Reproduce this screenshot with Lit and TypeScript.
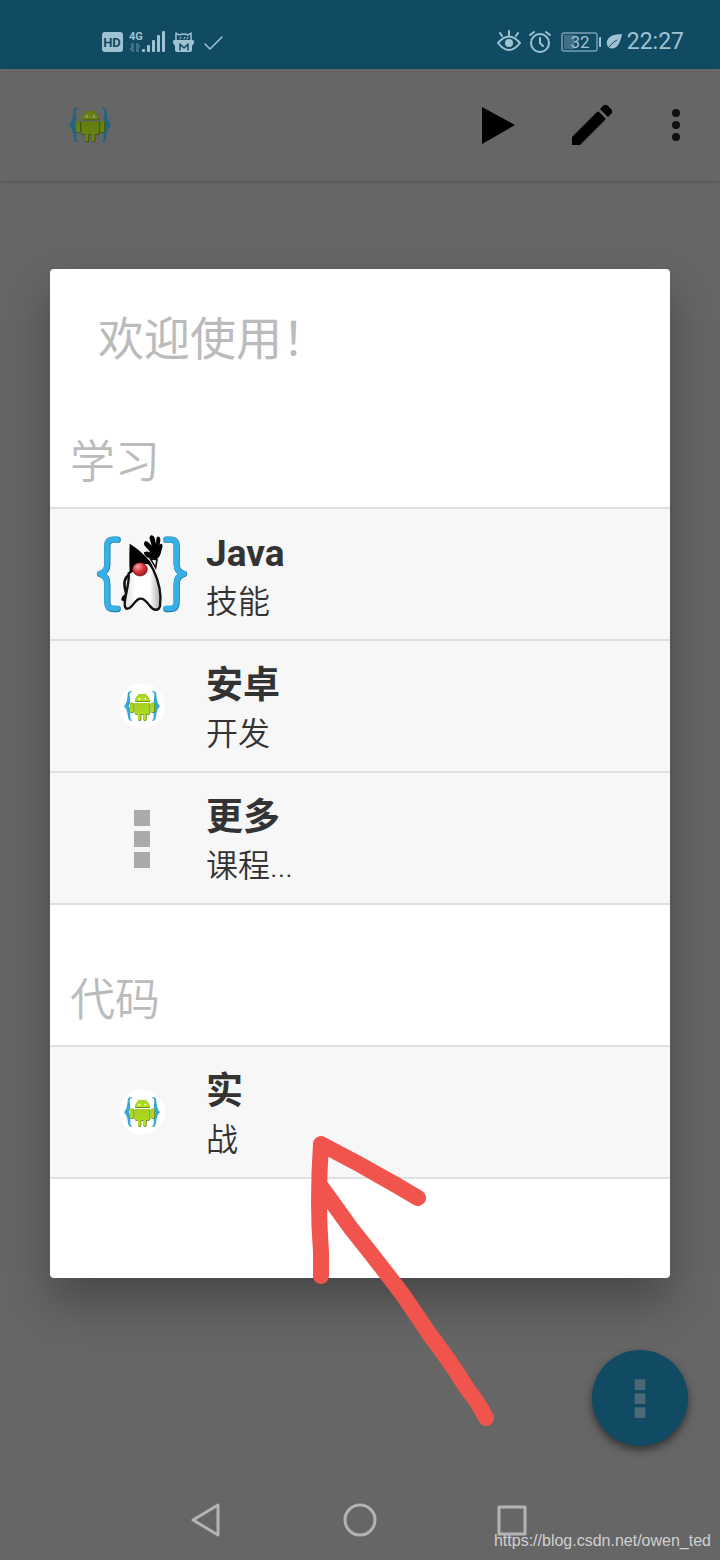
import { LitElement, html, css, svg, nothing } from 'lit';
import { customElement, property } from 'lit/decorators.js';

type IconName = 'java' | 'android' | 'more';

interface Entry {
    icon: IconName;
    title: string;
    subtitle: string;
}

interface Section {
    heading: string;
    entries: Entry[];
}

const SECTIONS: Section[] = [
    {
        heading: '学习',
        entries: [
            { icon: 'java', title: 'Java', subtitle: '技能' },
            { icon: 'android', title: '安卓', subtitle: '开发' },
            { icon: 'more', title: '更多', subtitle: '课程...' }
        ]
    },
    {
        heading: '代码',
        entries: [{ icon: 'android', title: '实', subtitle: '战' }]
    }
];

// Android robot between two braces, with an optional white disc behind it
const androidIcon = (disc: boolean) => html`
    <svg class="android" viewBox="0 0 144 144" aria-hidden="true">
        <defs>
            <linearGradient id="robot" x1="0" y1="0" x2="0" y2="1">
                <stop offset="0" stop-color="#a4d01c" />
                <stop offset="1" stop-color="#b4e01c" />
            </linearGradient>
        </defs>
        ${disc ? svg`<circle cx="72" cy="72" r="68" fill="#fff" />` : nothing}
        <g fill="#38a8da">
            <path d="M41 27 Q29 26 29 38 Q28 62 18 73 Q28 82 30 104 Q31 117 41 117 L41 114 Q36 112 37 100 Q39 82 33 73 Q39 62 35 40 Q34 31 41 30 Z" />
            <path d="M103 27 Q115 26 115 38 Q116 62 126 73 Q116 82 114 104 Q113 117 103 117 L103 114 Q108 112 107 100 Q105 82 111 73 Q105 62 109 40 Q110 31 103 30 Z" />
        </g>
        <g fill="#5c7a14">
            <path d="M51 60 Q52 43 63 40 L60 35 L66 38 Q73 35 80 38 L86 35 L83 40 Q94 43 96 60 Z" />
            <path d="M50 64 H97 V94 Q97 98 92 98 H86 V112 Q86 117 81 117 Q76 117 76 112 V98 H70 V112 Q70 117 65 117 Q60 117 60 112 V98 H55 Q50 98 50 94 Z" />
            <rect x="36" y="62" width="13" height="31" rx="6" />
            <rect x="98" y="62" width="13" height="31" rx="6" />
        </g>
        <g fill="url(#robot)">
            <path d="M51 58 Q52 42 63 39 L60 34 L66 37 Q73 34 80 37 L86 34 L83 39 Q93 42 94 58 Z" />
            <path d="M50 63 H95 V92 Q95 96 90 96 H84 V110 Q84 115 80 115 Q76 115 76 110 V96 H68 V110 Q68 115 64 115 Q60 115 60 110 V96 H55 Q50 96 50 92 Z" />
            <rect x="36" y="61" width="11" height="30" rx="5" />
            <rect x="98" y="61" width="11" height="30" rx="5" />
        </g>
        <circle cx="64" cy="50" r="3" fill="#fff" />
        <circle cx="82" cy="50" r="3" fill="#fff" />
    </svg>
`;

const javaIcon = html`
    <svg class="java" viewBox="0 0 276 240" aria-hidden="true">
        <defs>
            <radialGradient id="nose" cx="0.35" cy="0.3" r="0.8">
                <stop offset="0" stop-color="#f7a3a3" />
                <stop offset="0.5" stop-color="#d8343c" />
                <stop offset="1" stop-color="#9c1218" />
            </radialGradient>
            <linearGradient id="belly">
                <stop offset="0" stop-color="#ddd" />
                <stop offset="0.3" stop-color="#fff" />
                <stop offset="0.7" stop-color="#fff" />
                <stop offset="1" stop-color="#aaa" />
            </linearGradient>
        </defs>
        <g fill="none" stroke-linecap="round" stroke-linejoin="round">
            <g stroke="#1f7ca8" stroke-width="19">
                <path d="M65 17 H52 Q34 17 34 36 V90 Q34 114 12 120 Q34 126 34 150 V204 Q34 225 52 225 H65" />
                <path d="M211 17 H224 Q242 17 242 36 V90 Q242 114 264 120 Q242 126 242 150 V204 Q242 225 224 225 H211" />
            </g>
            <g stroke="#36b0e6" stroke-width="16">
                <path d="M64 16 H51 Q33 16 33 35 V89 Q33 113 11 119 Q33 125 33 149 V203 Q33 223 51 223 H64" />
                <path d="M210 16 H223 Q241 16 241 35 V89 Q241 113 263 119 Q241 125 241 149 V203 Q241 223 223 223 H210" />
            </g>
        </g>
        <path d="M98 122 Q82 137 86 158 L91 182" fill="none" stroke="#111" stroke-width="8" />
        <path d="M86 181 Q75 189 76 199 L86 203 L94 184 Z" fill="#000" />
        <path d="M163 74 L179 101 L183 77 Z" fill="#fff" stroke="#111" stroke-width="5" />
        <path d="M98 118 C101 149 86 184 86 213 C88 229 99 226 108 215 C120 201 125 193 135 194 C146 194 151 203 162 216 C173 231 189 231 192 216 C197 184 190 145 171 105 L154 80 Z" fill="url(#belly)" stroke="#111" stroke-width="7" />
        <path d="M101 29 C124 43 145 62 162 82 L171 99 Q156 88 145 91 Q112 99 101 119 Q99 68 101 29 Z" fill="#000" />
        <path d="M155 71 Q143 63 144 55 Q152 50 163 54 L145 34 Q142 25 148 22 Q154 20 160 28 L167 35 L161 14 Q160 5 167 4 Q173 4 176 12 L180 30 L181 14 Q183 6 189 8 Q194 10 193 18 L191 33 Q196 26 199 32 Q201 39 196 50 Q193 70 180 76 Q167 71 155 71 Z" fill="#000" />
        <ellipse cx="132" cy="106" rx="22" ry="20" fill="url(#nose)" stroke="#641014" stroke-width="2" />
    </svg>
`;

const squaresIcon = html`
    <svg class="squares" viewBox="0 0 18 60" aria-hidden="true">
        <rect x="1" y="2" width="16" height="16" />
        <rect x="1" y="23" width="16" height="16" />
        <rect x="1" y="44" width="16" height="16" />
    </svg>
`;

@customElement('status-bar')
export class StatusBar extends LitElement {
    @property() time = '22:27';
    @property() battery = '32';

    static styles = css`
        :host {
            display: flex;
            justify-content: space-between;
            align-items: center;
            box-sizing: border-box;
            height: 69px;
            padding: 14px 36px 0 101px;
            background: #114a63;
            color: #9fc3d3;
            font-family: Roboto, sans-serif;
        }

        .group {
            display: flex;
            align-items: center;
        }

        .left {
            gap: 6px;
        }

        .right {
            gap: 5px;
        }

        svg {
            display: block;
            height: 24px;
            fill: none;
            stroke: currentColor;
            stroke-width: 2;
            stroke-linecap: round;
            stroke-linejoin: round;
        }

        .fill {
            fill: currentColor;
            stroke: none;
        }

        .dark {
            fill: #114a63;
            stroke: none;
        }

        .dim {
            fill: #3f7088;
            stroke: none;
        }

        text {
            font-family: Roboto, sans-serif;
            font-weight: 700;
        }

        .level {
            font-size: 17px;
            font-weight: 400;
        }

        time {
            font-size: 23px;
            line-height: 28px;
        }
    `;

    render() {
        return html`
            <div class="group left">
                <svg width="22" viewBox="0 0 22 24">
                    <rect class="fill" x="1" y="2" width="21" height="20" rx="3" />
                    <text class="dark" x="11" y="17" font-size="13" text-anchor="middle">HD</text>
                </svg>
                <svg width="37" viewBox="0 0 37 24">
                    <text class="fill" x="0" y="10" font-size="11">4G</text>
                    <path class="dim" d="M5 13 v9 h-2 l-3 -4 h2 v-5 Z M7 22 v-9 h2 l3 4 h-2 v5 Z" />
                    <g class="fill">
                        <rect x="13" y="19" width="3" height="3" rx="1" />
                        <rect x="18" y="15" width="3" height="7" rx="1" />
                        <rect x="23" y="10" width="3" height="12" rx="1" />
                        <rect x="28" y="5" width="3" height="17" rx="1" />
                        <rect x="33" y="1" width="3" height="21" rx="1" />
                    </g>
                </svg>
                <svg width="24" viewBox="0 0 24 24">
                    <path d="M4 10 V3 L7 5 Q12 3 16 5 L19 3 V10" stroke-width="1.5" />
                    <path d="M8 9 l1 -2 M12 9 l1 -2 M15 9 l1 -2" stroke-width="1" />
                    <path class="fill" d="M3 10 H20 Q23 10 22 13 L20 16 V20 Q20 22 18 22 H5 Q3 22 3 20 V16 L1 13 Q0 10 3 10 Z" />
                    <path d="M8 20 V14 L12 18 L16 14 V20" stroke="#114a63" stroke-width="1.5" />
                </svg>
                <svg width="24" viewBox="0 0 24 24">
                    <path d="M3 14 L8 19 L20 7" stroke-width="1.5" />
                </svg>
            </div>
            <div class="group right">
                <svg width="28" viewBox="0 0 28 24">
                    <path d="M3 13 Q14 0 25 13 Q14 27 3 13 Z" />
                    <circle class="fill" cx="14" cy="13" r="4" />
                    <path d="M14 5 V1 M7 6 L5 3 M21 6 L23 3" />
                </svg>
                <svg width="28" viewBox="0 0 28 24">
                    <circle cx="12" cy="13" r="9" />
                    <path d="M12 8 V13 L15 16 M2 5 L6 2 M18 2 L22 5" />
                </svg>
                <svg width="40" viewBox="0 0 40 24">
                    <rect x="1" y="3" width="35" height="18" rx="2" stroke-width="1.5" opacity="0.7" />
                    <rect class="dim" x="3" y="5" width="11" height="14" />
                    <text class="fill level" x="19" y="18" text-anchor="middle">${this.battery}</text>
                    <rect class="fill" x="38" y="7" width="3" height="10" rx="1" />
                </svg>
                <svg width="16" viewBox="0 0 16 24">
                    <path class="fill" d="M16 4 Q3 4 1 11 Q0 15 3 18 Q13 21 16 4 Z" />
                    <path d="M1 20 Q4 14 11 10" stroke="#114a63" stroke-width="1" />
                </svg>
                <time>${this.time}</time>
            </div>
        `;
    }
}

@customElement('app-toolbar')
export class AppToolbar extends LitElement {
    static styles = css`
        :host {
            display: flex;
            align-items: center;
            box-sizing: border-box;
            height: 112px;
            padding: 0 7px 0 62px;
            background: #666;
            box-shadow: 0 1px 4px rgba(0, 0, 0, 0.2);
        }

        .logo {
            flex: 1;
            filter: brightness(0.6);
        }

        .android {
            display: block;
            width: 56px;
            height: 56px;
        }

        button {
            display: grid;
            place-items: center;
            width: 94px;
            height: 96px;
            padding: 0;
            border: 0;
            background: none;
            cursor: pointer;
        }

        .overflow {
            width: 74px;
        }

        button svg {
            display: block;
            width: 40px;
            height: 40px;
        }
    `;

    render() {
        return html`
            <div class="logo">${androidIcon(false)}</div>
            <button aria-label="运行">
                <svg viewBox="0 0 40 40"><path d="M4 2 L37 20 L4 39 Z" /></svg>
            </button>
            <button aria-label="编辑">
                <svg viewBox="0 0 40 40">
                    <path d="M0 32 L25 7 Q26 6 27 7 L33 13 Q34 14 33 15 L8 40 H0 Z" />
                    <path d="M28 4 L32 0 Q33 -1 35 0 L40 5 Q41 7 40 8 L36 12 Z" />
                </svg>
            </button>
            <button class="overflow" aria-label="菜单">
                <svg viewBox="0 0 40 40" fill="#111">
                    <circle cx="20" cy="8" r="4" />
                    <circle cx="20" cy="20" r="4" />
                    <circle cx="20" cy="32" r="4" />
                </svg>
            </button>
        `;
    }
}

@customElement('welcome-dialog')
export class WelcomeDialog extends LitElement {
    @property({ attribute: false }) sections: Section[] = [];

    static styles = css`
        :host {
            display: block;
            box-sizing: border-box;
            padding-bottom: 99px;
            border-radius: 4px;
            background: #fff;
            box-shadow: 0 24px 48px rgba(0, 0, 0, 0.3);
            color: #333;
            font-family: Roboto, 'Noto Sans CJK SC', sans-serif;
        }

        h1,
        h2 {
            margin: 0;
            color: #bbb;
            line-height: 52px;
        }

        h1 {
            padding: 44px 48px 48px;
            font-size: 46px;
            font-weight: 400;
        }

        h2 {
            padding: 24px 20px 18px;
            font-size: 45px;
            font-weight: 350;
        }

        section + section {
            margin-top: 46px;
        }

        ul {
            margin: 0;
            padding: 0;
            border-top: 2px solid #e0e0e0;
            list-style: none;
        }

        li {
            border-bottom: 2px solid #e0e0e0;
        }

        .entry {
            display: flex;
            align-items: center;
            gap: 18px;
            width: 100%;
            height: 130px;
            padding: 0 46px;
            border: 0;
            background: #f7f7f7;
            color: inherit;
            font: inherit;
            text-align: left;
            cursor: pointer;
        }

        .icon {
            display: grid;
            place-items: center;
            width: 92px;
        }

        .icon svg {
            display: block;
        }

        .java {
            width: 92px;
            height: 80px;
        }

        .android {
            width: 48px;
            height: 48px;
        }

        .squares {
            width: 18px;
            height: 60px;
            fill: #aaa;
        }

        .text {
            display: flex;
            flex-direction: column;
            padding-top: 8px;
        }

        .title {
            font-size: 37px;
            font-weight: 700;
            line-height: 48px;
        }

        .subtitle {
            font-size: 32px;
            font-weight: 350;
            line-height: 48px;
        }
    `;

    render() {
        return html`
            <h1>欢迎使用！</h1>
            ${this.sections.map(section => html`
                <section>
                    <h2>${section.heading}</h2>
                    <ul>
                        ${section.entries.map(entry => this.renderEntry(entry))}
                    </ul>
                </section>
            `)}
        `;
    }

    renderEntry(entry: Entry) {
        return html`
            <li>
                <button class="entry">
                    <span class="icon">${this.renderIcon(entry.icon)}</span>
                    <span class="text">
                        <span class="title">${entry.title}</span>
                        <span class="subtitle">${entry.subtitle}</span>
                    </span>
                </button>
            </li>
        `;
    }

    renderIcon(icon: IconName) {
        if (icon === 'java') return javaIcon;
        if (icon === 'android') return androidIcon(true);
        return squaresIcon;
    }
}

@customElement('nav-bar')
export class NavBar extends LitElement {
    static styles = css`
        :host {
            display: flex;
            justify-content: center;
            height: 82px;
        }

        button {
            display: grid;
            place-items: center;
            width: 153px;
            padding: 0;
            border: 0;
            background: none;
        }

        svg {
            display: block;
            width: 36px;
            height: 36px;
            fill: none;
            stroke: #b3b3b3;
            stroke-width: 3;
            stroke-linejoin: round;
        }
    `;

    render() {
        return html`
            <button aria-label="返回"><svg viewBox="0 0 36 36"><path d="M29 4 V34 L4 19 Z" /></svg></button>
            <button aria-label="主页"><svg viewBox="0 0 36 36"><circle cx="18" cy="19" r="15" /></svg></button>
            <button aria-label="最近"><svg viewBox="0 0 36 36"><rect x="4" y="6" width="26" height="27" /></svg></button>
        `;
    }
}

@customElement('app-root')
export class AppRoot extends LitElement {
    static styles = css`
        :host {
            position: relative;
            display: flex;
            flex-direction: column;
            min-height: 100vh;
            background: #666;
            overflow: hidden;
        }

        main {
            flex: 1;
        }

        .fab {
            position: absolute;
            right: 32px;
            bottom: 114px;
            display: grid;
            place-items: center;
            width: 96px;
            height: 96px;
            padding: 0;
            border: 0;
            border-radius: 50%;
            background: #114a63;
            box-shadow: 0 4px 8px rgba(0, 0, 0, 0.5);
        }

        .fab .squares {
            width: 12px;
            height: 40px;
            fill: #4a6a78;
        }

        .overlay {
            position: absolute;
            inset: 69px 0 82px;
            display: flex;
            align-items: center;
            padding: 0 50px;
        }

        welcome-dialog {
            flex: 1;
        }

        /* Hand-drawn pointer lying over the dialog */
        .arrow {
            position: absolute;
            top: 1130px;
            left: 300px;
            width: 200px;
            height: 300px;
            fill: none;
            stroke: #f0544c;
            stroke-width: 16;
            stroke-linecap: round;
            stroke-linejoin: round;
            pointer-events: none;
        }

        .watermark {
            position: absolute;
            right: 9px;
            bottom: 9px;
            color: #d0d0d0;
            font-family: 'Liberation Sans', sans-serif;
            font-size: 16px;
            line-height: 20px;
        }
    `;

    render() {
        return html`
            <status-bar></status-bar>
            <app-toolbar></app-toolbar>
            <main></main>
            <nav-bar></nav-bar>
            <button class="fab" aria-label="更多">${squaresIcon}</button>
            <div class="overlay">
                <welcome-dialog role="dialog" .sections=${SECTIONS}></welcome-dialog>
            </div>
            <svg class="arrow" viewBox="0 0 200 300" aria-hidden="true">
                <path d="M118 68 L96 55 Q60 34 21 14 Q19 42 19 72 Q19 96 21 122 L21 146" />
                <path d="M22 58 Q38 80 50 97 Q78 132 103 165 L130 205 Q150 231 168 260 Q178 272 186 288" />
            </svg>
            <span class="watermark">https://blog.csdn.net/owen_ted</span>
        `;
    }
}
